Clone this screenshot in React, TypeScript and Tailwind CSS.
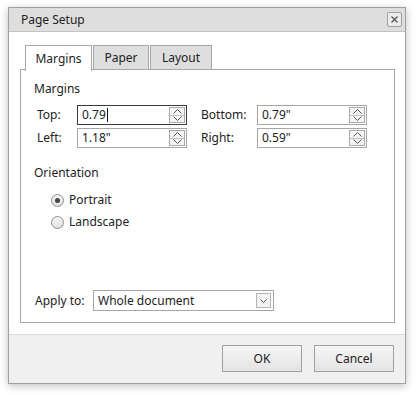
import React from "react";

const font = { fontFamily: '"Noto Sans", "Open Sans", Arial, sans-serif' };

function Spinner() {
  return (
    <div className="flex flex-col w-[16px] h-[16px] border border-[#a8a8a8] bg-[#f4f4f4] mr-[1px]">
      <div className="flex-1 flex items-center justify-center border-b border-[#c4c4c4]">
        <svg width="9" height="5" viewBox="0 0 9 5" fill="none" stroke="#555" strokeWidth="1">
          <path d="M0.5 4.5 L4.5 0.5 L8.5 4.5" />
        </svg>
      </div>
      <div className="flex-1 flex items-center justify-center">
        <svg width="9" height="5" viewBox="0 0 9 5" fill="none" stroke="#555" strokeWidth="1">
          <path d="M0.5 0.5 L4.5 4.5 L8.5 0.5" />
        </svg>
      </div>
    </div>
  );
}

function SpinInput({ value, focused, width }: { value: string; focused?: boolean; width: string }) {
  return (
    <div
      className={`flex items-center h-[20px] ${width} border bg-white ${
        focused ? "border-[#3a3a3a]" : "border-[#a6a6a6]"
      }`}
    >
      <div className="flex-1 flex items-center pl-[4px] text-[12px] text-[#222] leading-none">
        {value}
        {focused && <span className="inline-block w-[1px] h-[14px] bg-[#111] ml-[1px]" />}
      </div>
      <Spinner />
    </div>
  );
}

function Radio({ label, checked }: { label: string; checked?: boolean }) {
  return (
    <div className="flex items-center gap-[5px] h-[22px]">
      <div className="w-[13px] h-[13px] rounded-full border border-[#8e8e8e] bg-gradient-to-b from-[#f4f4f4] to-[#e2e2e2] flex items-center justify-center">
        {checked && <div className="w-[5px] h-[5px] rounded-full bg-[#444]" />}
      </div>
      <span className="text-[12px] text-[#222]">{label}</span>
    </div>
  );
}

export default function App() {
  return (
    <div className="w-[418px] h-[395px] bg-white pl-[8px] pt-[7px]" style={font}>
      <div className="w-[398px] h-[377px] border border-[#a0a0a0] flex flex-col shadow-[0_2px_8px_rgba(0,0,0,0.25)]">
        {/* Title bar */}
        <div className="h-[24px] bg-[#dedede] border-b border-[#c4c4c4] flex items-center justify-between pl-[12px] pr-[3px]">
          <span className="text-[12px] text-[#222]">Page Setup</span>
          <div className="w-[15px] h-[15px] rounded-[2px] border border-[#a0a0a0] bg-[#ececec] flex items-center justify-center">
            <svg width="7" height="7" viewBox="0 0 7 7" stroke="#555" strokeWidth="1.3">
              <path d="M0.5 0.5 L6.5 6.5 M6.5 0.5 L0.5 6.5" />
            </svg>
          </div>
        </div>

        {/* Body */}
        <div className="flex-1 bg-white pt-[13px] pl-[11px] pr-[10px] pb-[11px] flex flex-col">
          {/* Tabs */}
          <div className="flex pl-[5px] h-[25px] relative z-10">
            <div className="w-[67px] h-[26px] border border-[#a6a6a6] border-b-0 bg-white flex items-center justify-center text-[12px] text-[#222]">
              Margins
            </div>
            <div className="w-[56px] h-[25px] ml-[1px] border border-[#a6a6a6] bg-[#dedede] flex items-center justify-center text-[12px] text-[#222]">
              Paper
            </div>
            <div className="w-[62px] h-[25px] ml-[1px] border border-[#a6a6a6] bg-[#dedede] flex items-center justify-center text-[12px] text-[#222]">
              Layout
            </div>
          </div>

          {/* Tab panel */}
          <div className="flex-1 border border-[#a6a6a6] -mt-[1px] pl-[13px] pt-[11px] flex flex-col">
            <div className="text-[12px] text-[#222] leading-[16px]">Margins</div>

            <div className="mt-[8px] flex flex-col gap-[3px]">
              <div className="flex items-center">
                <span className="w-[40px] ml-[3px] text-[12px] text-[#222]">Top:</span>
                <SpinInput value="0.79" focused width="w-[110px]" />
                <span className="w-[56px] ml-[14px] text-[12px] text-[#222]">Bottom:</span>
                <SpinInput value={'0.79"'} width="w-[110px]" />
              </div>
              <div className="flex items-center">
                <span className="w-[40px] ml-[3px] text-[12px] text-[#222]">Left:</span>
                <SpinInput value={'1.18"'} width="w-[110px]" />
                <span className="w-[56px] ml-[14px] text-[12px] text-[#222]">Right:</span>
                <SpinInput value={'0.59"'} width="w-[110px]" />
              </div>
            </div>

            <div className="mt-[17px] text-[12px] text-[#222] leading-[16px]">Orientation</div>
            <div className="mt-[8px] pl-[17px] flex flex-col">
              <Radio label="Portrait" checked />
              <Radio label="Landscape" />
            </div>

            <div className="mt-auto mb-[11px] flex items-center">
              <span className="w-[58px] ml-[1px] text-[12px] text-[#222]">Apply to:</span>
              <div className="w-[181px] h-[21px] border border-[#a6a6a6] bg-white flex items-center justify-between pl-[4px] pr-[2px]">
                <span className="text-[12px] text-[#222]">Whole document</span>
                <div className="w-[15px] h-[15px] border border-[#b4b4b4] bg-[#f4f4f4] flex items-center justify-center">
                  <svg width="7" height="4" viewBox="0 0 7 4" fill="none" stroke="#555" strokeWidth="1">
                    <path d="M0.5 0.5 L3.5 3.5 L6.5 0.5" />
                  </svg>
                </div>
              </div>
            </div>
          </div>
        </div>

        {/* Footer */}
        <div className="h-[49px] bg-[#f0f0f0] border-t border-[#dcdcdc] flex items-start justify-end gap-[12px] pt-[10px] pr-[11px]">
          <button className="w-[80px] h-[27px] border border-[#a0a0a0] bg-gradient-to-b from-[#f6f6f6] to-[#e4e4e4] text-[12px] text-[#222]">
            OK
          </button>
          <button className="w-[80px] h-[27px] border border-[#a0a0a0] bg-gradient-to-b from-[#f6f6f6] to-[#e4e4e4] text-[12px] text-[#222]">
            Cancel
          </button>
        </div>
      </div>
    </div>
  );
}
